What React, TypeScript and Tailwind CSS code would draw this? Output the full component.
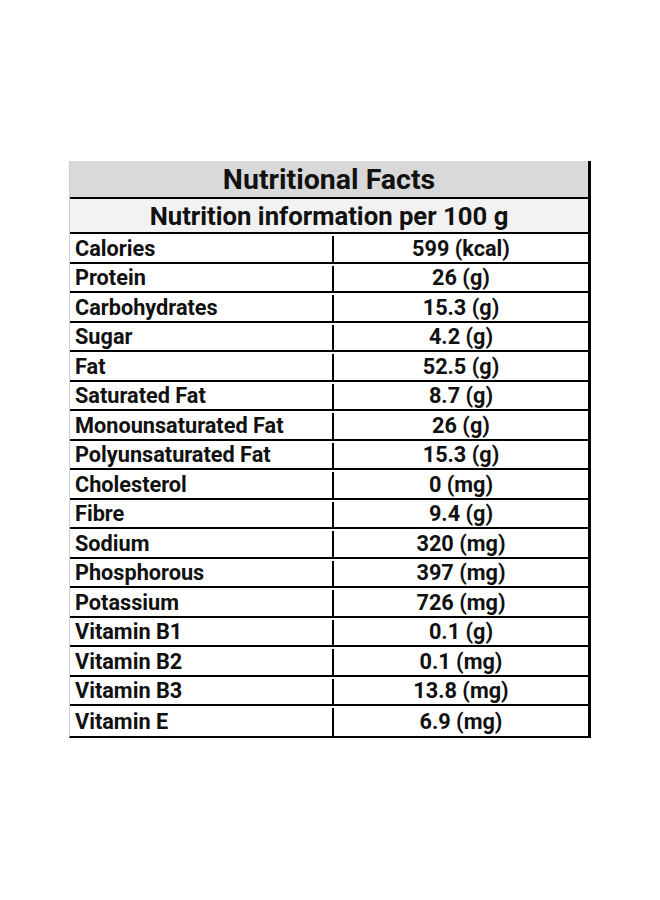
const rows: [string, string][] = [
  ["Calories", "599 (kcal)"],
  ["Protein", "26 (g)"],
  ["Carbohydrates", "15.3 (g)"],
  ["Sugar", "4.2 (g)"],
  ["Fat", "52.5 (g)"],
  ["Saturated Fat", "8.7 (g)"],
  ["Monounsaturated Fat", "26 (g)"],
  ["Polyunsaturated Fat", "15.3 (g)"],
  ["Cholesterol", "0 (mg)"],
  ["Fibre", "9.4 (g)"],
  ["Sodium", "320 (mg)"],
  ["Phosphorous", "397 (mg)"],
  ["Potassium", "726 (mg)"],
  ["Vitamin B1", "0.1 (g)"],
  ["Vitamin B2", "0.1 (mg)"],
  ["Vitamin B3", "13.8 (mg)"],
  ["Vitamin E", "6.9 (mg)"],
];

export default function App() {
  return (
    <div className="min-h-[900px] w-[660px] bg-white pt-[161px] pl-[69px] font-['Roboto',sans-serif] font-bold text-[#111]">
      <div className="w-[522px] border-l border-l-[#cfcfcf] border-r-[3px] border-r-black border-b-2 border-b-black">
        <div className="flex h-[38px] items-center justify-center border-b-2 border-black bg-[#d9d9d9] pt-[3px] text-[28.5px] leading-none">
          Nutritional Facts
        </div>
        <div className="flex h-[35px] items-center justify-center border-b-2 border-black bg-[#f2f2f2] pt-[2px] text-[25.7px] leading-none">
          Nutrition information per 100 g
        </div>
        {rows.map(([label, value], i) => (
          <div
            key={label}
            className={
              "flex h-[29.5px] pt-[2px] text-[21.7px] leading-none" +
              (i < rows.length - 1 ? " border-b-2 border-black" : "")
            }
          >
            <div className="flex w-[264px] items-center border-r-2 border-black pl-[5px]">{label}</div>
            <div className="flex flex-1 items-center justify-center">{value}</div>
          </div>
        ))}
      </div>
    </div>
  );
}
